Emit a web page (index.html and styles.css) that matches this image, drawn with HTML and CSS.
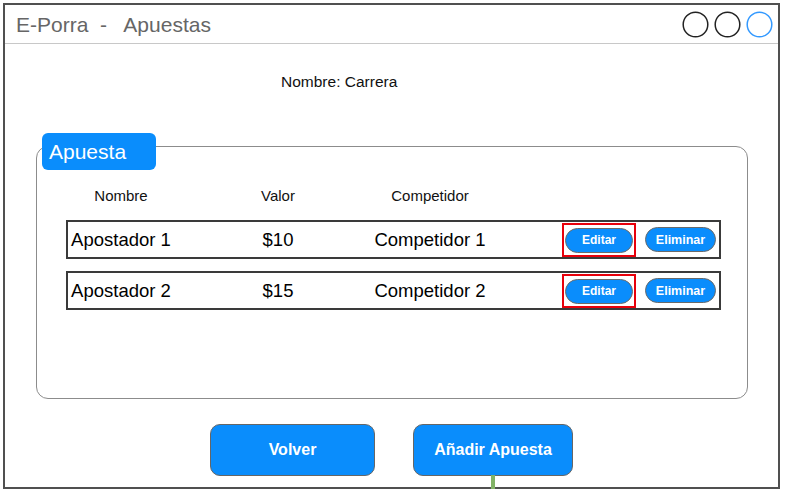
FILE: index.html
```html
<!DOCTYPE html>
<html lang="es">
<head>
<meta charset="utf-8">
<title>E-Porra - Apuestas</title>
<link rel="stylesheet" href="styles.css">
</head>
<body>
<div class="window">
  <div class="titlebar">
    <span class="title">E-Porra  -   Apuestas</span>
    <div class="controls">
      <svg class="ctl" viewBox="0 0 27 27"><circle cx="13.5" cy="13.5" r="12.3" fill="none" stroke="#222" stroke-width="1.5"/></svg>
      <svg class="ctl" viewBox="0 0 27 27"><circle cx="13.5" cy="13.5" r="12.3" fill="none" stroke="#222" stroke-width="1.5"/></svg>
      <svg class="ctl" viewBox="0 0 27 27"><circle cx="13.5" cy="13.5" r="12.3" fill="none" stroke="#3399ff" stroke-width="1.5"/></svg>
    </div>
  </div>
  <div class="race">Nombre: Carrera</div>
  <div class="group">
    <div class="tab">Apuesta</div>
    <div class="box">
      <div class="head">
        <span class="c-name">Nombre</span>
        <span class="c-val">Valor</span>
        <span class="c-comp">Competidor</span>
      </div>
      <div class="row">
        <span class="c-name">Apostador 1</span>
        <span class="c-val">$10</span>
        <span class="c-comp">Competidor 1</span>
        <div class="actions">
          <div class="highlight"><span class="pill pill-edit">Editar</span></div>
          <span class="pill pill-del">Eliminar</span>
        </div>
      </div>
      <div class="row row2">
        <span class="c-name">Apostador 2</span>
        <span class="c-val">$15</span>
        <span class="c-comp">Competidor 2</span>
        <div class="actions">
          <div class="highlight"><span class="pill pill-edit">Editar</span></div>
          <span class="pill pill-del">Eliminar</span>
        </div>
      </div>
    </div>
  </div>
  <div class="buttons">
    <span class="btn btn-back">Volver</span>
    <span class="btn btn-add">Añadir Apuesta<span class="link"></span></span>
  </div>
</div>
</body>
</html>
```
FILE: styles.css
```css
* { box-sizing: border-box; }
html, body { margin: 0; padding: 0; background: #fff; }
body { font-family: "Liberation Sans", Arial, sans-serif; color: #000; }

.window {
  position: relative;
  margin: 3px 0 0 3px;
  width: 777px;
  height: 486px;
  border: 2px solid #505050;
  background: #fff;
}

.titlebar {
  display: flex;
  align-items: center;
  justify-content: space-between;
  height: 39px;
  border-bottom: 1px solid #c8c8c8;
  padding: 1px 5px 0 11px;
}
.title {
  white-space: pre;
  font-size: 21px;
  color: #666;
}
.controls { display: flex; gap: 5px; }
.ctl { width: 27px; height: 27px; display: block; }

.race {
  margin: 29px 0 0 276px;
  font-size: 15.5px;
  line-height: 18px;
  color: #111;
}

.group { margin-top: 42px; }
.tab {
  position: relative;
  z-index: 1;
  margin-left: 37px;
  width: 114px;
  height: 37px;
  border-radius: 6px;
  background: #0a8dfc;
  color: #fff;
  font-size: 21px;
  line-height: 37px;
  padding-left: 7px;
}
.box {
  margin: -24px 0 0 31px;
  width: 712px;
  height: 253px;
  border: 1.5px solid #8c8c8c;
  border-radius: 12px;
  padding-top: 40px;
}

.head {
  display: flex;
  padding-left: 31px;
  font-size: 15px;
  line-height: 18px;
  color: #111;
}
.c-name { width: 106px; text-align: center; white-space: nowrap; }
.c-val { width: 100px; margin-left: 54px; text-align: center; white-space: nowrap; }
.c-comp { width: 120px; margin-left: 42px; text-align: center; white-space: nowrap; }

.row {
  display: flex;
  align-items: center;
  margin: 15px 0 0 29px;
  width: 655px;
  height: 39px;
  border: 2px solid #3a3a3a;
  font-size: 18.5px;
}
.row2 { margin-top: 12px; }

.actions {
  margin-left: auto;
  padding-right: 3px;
  display: flex;
  align-items: center;
  gap: 9px;
}
.highlight {
  width: 74px;
  height: 34px;
  border: 2px solid #e8000b;
  display: flex;
  align-items: center;
  justify-content: center;
  padding-top: 1px;
}
.pill {
  display: flex;
  align-items: center;
  justify-content: center;
  height: 25px;
  border-radius: 13px;
  background: #0a8dfc;
  border: 1px solid #6a6a6a;
  color: #fff;
  font-weight: bold;
  font-size: 12px;
}
.pill-edit { width: 68px; }
.pill-del { width: 71px; font-size: 12.5px; }

.buttons {
  display: flex;
  gap: 38px;
  margin: 25px 0 0 205px;
}
.btn {
  position: relative;
  display: flex;
  align-items: center;
  justify-content: center;
  height: 52px;
  border-radius: 10px;
  background: #0a8dfc;
  border: 1px solid #666;
  color: #fff;
  font-weight: bold;
  font-size: 16px;
}
.btn-back { width: 165px; }
.btn-add { width: 160px; }
.link {
  position: absolute;
  top: 100%;
  left: 50%;
  width: 4px;
  height: 20px;
  margin-left: -2px;
  background: #82b366;
  z-index: 2;
}
```
